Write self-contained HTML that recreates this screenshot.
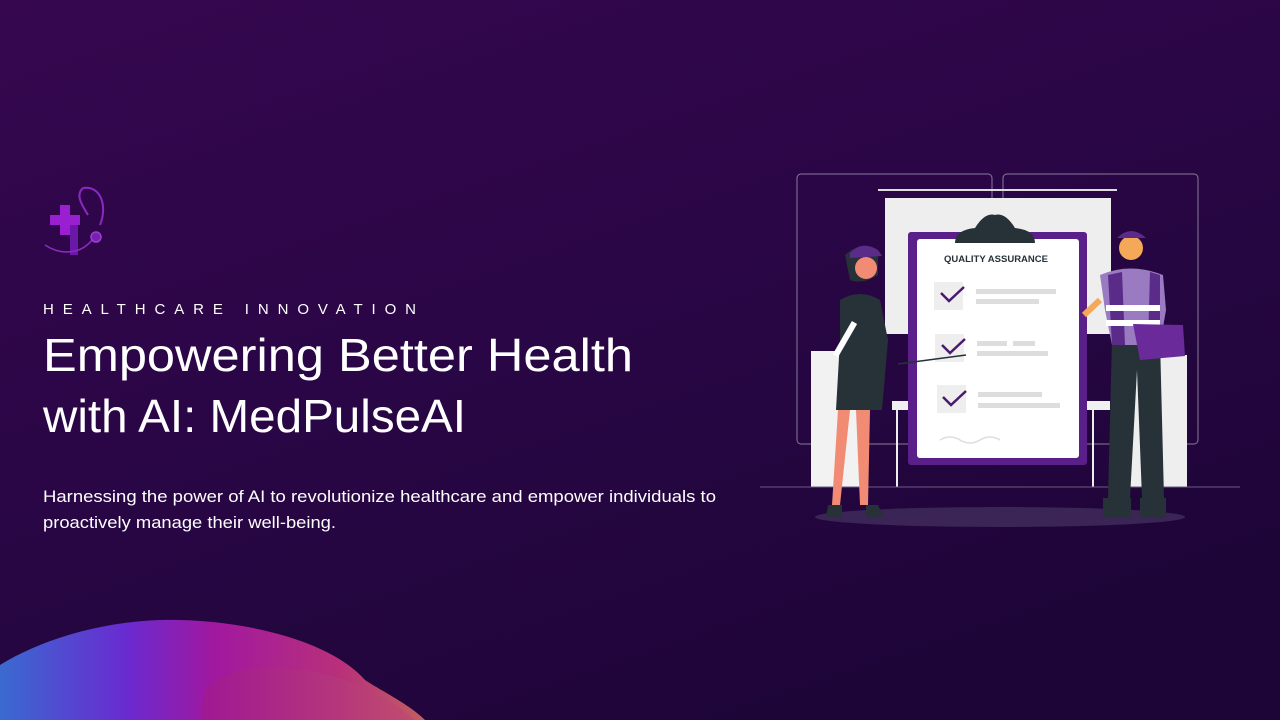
<!DOCTYPE html>
<html><head><meta charset="utf-8"><style>
html,body{margin:0;padding:0;width:1280px;height:720px;overflow:hidden;background:#2a0645}
svg{display:block}
text{font-family:"Liberation Sans",sans-serif}
</style></head><body>
<svg width="1280" height="720" viewBox="0 0 1280 720" xmlns="http://www.w3.org/2000/svg">
<defs>
<linearGradient id="bg" x1="0" y1="0" x2="0.6" y2="1">
<stop offset="0" stop-color="#36074f"/><stop offset="0.5" stop-color="#2a0646"/><stop offset="1" stop-color="#1e0538"/>
</linearGradient>
<linearGradient id="blob" x1="0" y1="0" x2="1" y2="0">
<stop offset="0" stop-color="#3a6ad0"/><stop offset="0.3" stop-color="#6a2ad0"/><stop offset="0.5" stop-color="#a018a0"/><stop offset="0.8" stop-color="#b8307a"/><stop offset="1" stop-color="#c06060"/>
</linearGradient>
<linearGradient id="blob2" x1="0" y1="0" x2="1" y2="0">
<stop offset="0" stop-color="#a01890"/><stop offset="1" stop-color="#c04a70"/>
</linearGradient>
</defs>
<rect width="1280" height="720" fill="url(#bg)"/>
<!-- blob -->
<path d="M0 665 C40 640 100 622 160 620 C240 618 330 640 365 680 C380 690 410 705 425 720 L0 720 Z" fill="url(#blob)"/>
<path d="M205 690 C220 670 260 665 300 670 C340 675 380 690 415 720 L200 720 Z" fill="url(#blob2)" opacity="0.8"/>
<!-- logo -->
<path d="M60 205 h10 v10 h10 v10 h-10 v10 h-10 v-10 h-10 v-10 h10 Z" fill="#9a1fd0"/>
<rect x="70" y="225" width="8" height="30" fill="#6a18a8"/>
<path d="M83 188 C100 185 108 205 100 225 M83 188 C75 195 82 205 88 215" stroke="#8a2ac0" stroke-width="2" fill="none"/>
<path d="M45 245 C60 255 80 255 92 240" stroke="#8a2ac0" stroke-width="1.6" fill="none"/>
<circle cx="96" cy="237" r="5" fill="#7a20b0" stroke="#9a40d0" stroke-width="1.5"/>
<!-- text -->
<text x="43" y="314" font-size="15" fill="#fff" textLength="373" lengthAdjust="spacing">HEALTHCARE INNOVATION</text>
<text x="43" y="371" font-size="46" fill="#fff" textLength="590" lengthAdjust="spacingAndGlyphs">Empowering Better Health</text>
<text x="43" y="432" font-size="46" fill="#fff" textLength="423" lengthAdjust="spacingAndGlyphs">with AI: MedPulseAI</text>
<text x="43" y="502" font-size="16.5" fill="#fff" textLength="673" lengthAdjust="spacingAndGlyphs">Harnessing the power of AI to revolutionize healthcare and empower individuals to</text>
<text x="43" y="528" font-size="16.5" fill="#fff" textLength="293" lengthAdjust="spacingAndGlyphs">proactively manage their well-being.</text>
<!-- illustration -->
<rect x="797" y="174" width="195" height="270" rx="4" fill="none" stroke="#8a7a9a" stroke-width="1"/>
<rect x="1003" y="174" width="195" height="270" rx="4" fill="none" stroke="#8a7a9a" stroke-width="1"/>
<rect x="885" y="198" width="226" height="136" fill="#eeeeee"/>
<line x1="878" y1="190" x2="1117" y2="190" stroke="#ddd" stroke-width="2"/>
<rect x="811" y="351" width="50" height="136" fill="#f2f2f2"/>
<rect x="1130" y="355" width="57" height="132" fill="#eeeeee"/>
<rect x="892" y="401" width="218" height="9" fill="#f0f0f0"/>
<line x1="897" y1="410" x2="897" y2="487" stroke="#eee" stroke-width="2"/>
<line x1="1093" y1="410" x2="1093" y2="487" stroke="#eee" stroke-width="2"/>
<line x1="760" y1="487" x2="1240" y2="487" stroke="#6a5a80" stroke-width="1"/>
<ellipse cx="1000" cy="517" rx="185" ry="10" fill="#3a2556"/>
<rect x="908" y="232" width="179" height="233" rx="3" fill="#5b1f8a"/>
<rect x="917" y="239" width="162" height="219" rx="3" fill="#fff"/>
<path d="M955 243 Q955 230 975 228 Q985 212 995 215 Q1005 212 1015 228 Q1035 230 1035 243 Z" fill="#263238"/>
<text x="996" y="262" font-size="9.5" font-weight="bold" fill="#263238" text-anchor="middle">QUALITY ASSURANCE</text>
<g fill="#eee"><rect x="934" y="282" width="29" height="28"/><rect x="935" y="334" width="29" height="28"/><rect x="937" y="385" width="29" height="28"/></g>
<g stroke="#4a1a70" stroke-width="2.5" fill="none"><path d="M941 293 l8 8 l15 -14"/><path d="M942 345 l8 8 l15 -14"/><path d="M943 397 l8 8 l15 -14"/></g>
<g fill="#ddd"><rect x="976" y="289" width="80" height="5"/><rect x="976" y="299" width="63" height="5"/><rect x="977" y="341" width="30" height="5"/><rect x="1013" y="341" width="22" height="5"/><rect x="977" y="351" width="71" height="5"/><rect x="978" y="392" width="64" height="5"/><rect x="978" y="403" width="82" height="5"/></g>
<path d="M940 440 q10 -6 20 0 t20 0 t20 0" stroke="#ddd" fill="none" stroke-width="1.5"/>
<!-- woman -->
<path d="M838 410 L832 505 L840 505 L850 410 Z M856 410 L860 505 L868 505 L870 410 Z" fill="#f28b74"/>
<path d="M840 300 Q860 288 880 300 L888 340 L882 410 L836 410 L840 340 Z" fill="#263238"/>
<path d="M845 255 Q862 240 878 252 L878 275 Q862 285 850 280 Z" fill="#263238"/>
<circle cx="866" cy="268" r="11" fill="#f28b74"/>
<path d="M850 253 Q862 240 878 250 L882 256 L850 258 Z" fill="#5b2b8a"/>
<rect x="842" y="320" width="6" height="38" fill="#fff" transform="rotate(30 845 339)"/>
<line x1="898" y1="364" x2="966" y2="355" stroke="#263238" stroke-width="1.5"/>
<path d="M828 505 h14 v12 h-16 Z M866 505 h12 l6 12 h-18 Z" fill="#263238"/>
<!-- man -->
<path d="M1112 340 L1108 498 L1130 498 L1137 370 L1142 498 L1164 498 L1160 340 Z" fill="#263238"/>
<path d="M1100 275 Q1130 262 1163 275 L1166 310 L1160 345 L1112 345 L1105 310 Z" fill="#9a7ac0"/>
<path d="M1108 275 L1122 272 L1125 345 L1112 345 Z M1150 272 L1160 275 L1160 345 L1148 345 Z" fill="#5b2b8a"/>
<rect x="1106" y="305" width="54" height="6" fill="#fff"/><rect x="1106" y="320" width="54" height="6" fill="#fff"/>
<circle cx="1131" cy="248" r="12" fill="#f5a858"/>
<path d="M1117 238 Q1131 224 1146 238 Z" fill="#5b2b8a"/>
<path d="M1133 324 L1183 325 L1185 356 L1140 360 Z" fill="#6a2a9a"/>
<path d="M1100 300 L1084 315" stroke="#f5a858" stroke-width="6"/>
<path d="M1103 498 h28 v20 h-28 Z M1140 498 h26 v20 h-26 Z" fill="#263238"/>
</svg>
</body></html>
